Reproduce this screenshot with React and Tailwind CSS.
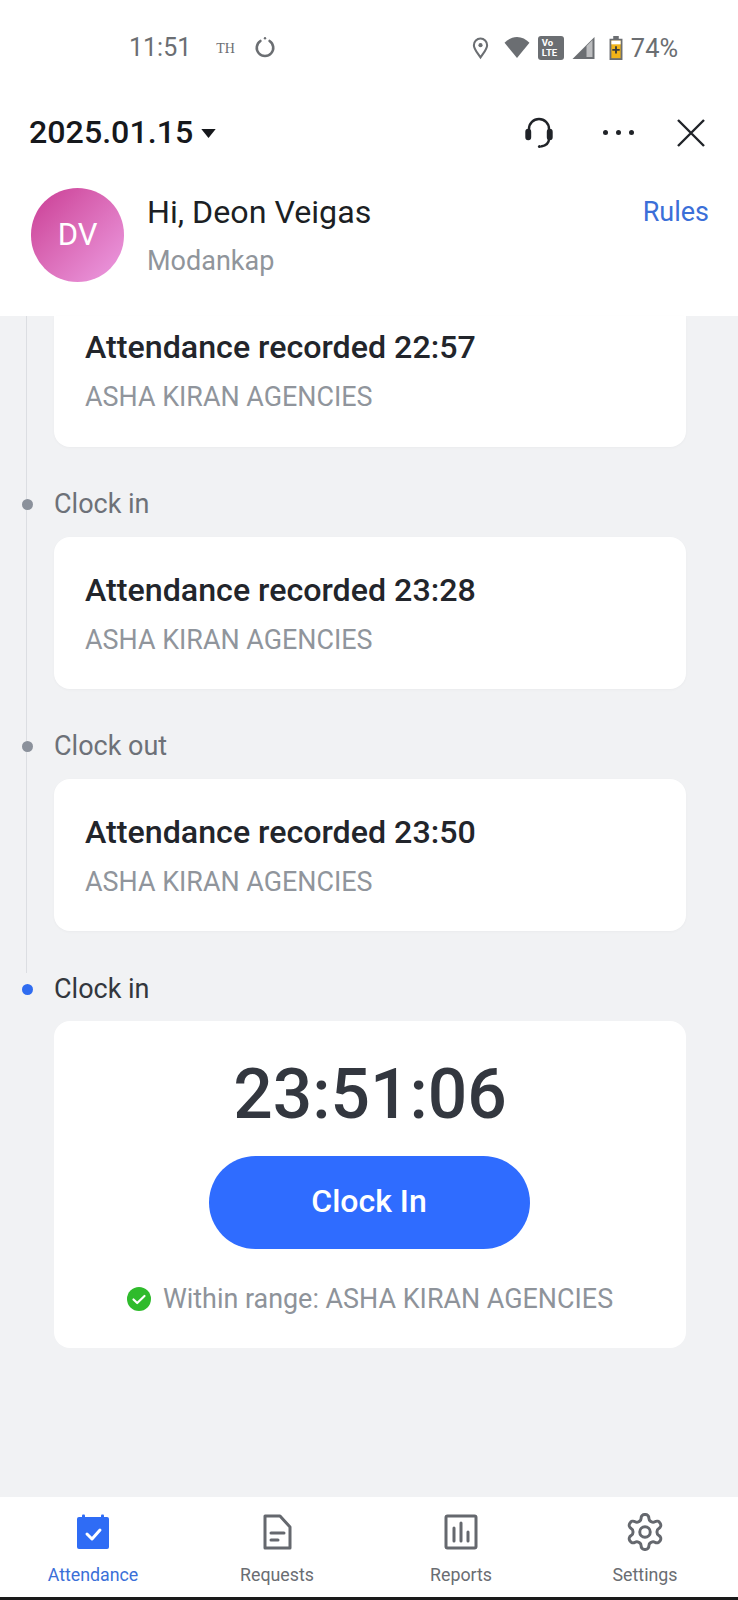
const ROBOTO = { fontFamily: 'Roboto, sans-serif' }

function StatusBar() {
  return (
    <div className="h-[80px] flex items-center justify-between pl-[129px] pr-[60px] pt-[16px] text-[#6b6e72]">
      <div className="flex items-center">
        <span className="text-[25px]">11:51</span>
        <span className="ml-[25px] text-[14px] font-['Liberation_Serif',serif]">TH</span>
        <svg className="ml-[19px] mb-[4px]" width="22" height="24" viewBox="0 0 24 24" fill="none" stroke="#6b6e72" strokeWidth="2.800">
          <path d="M7 6.500a9 9 0 1 0 10 0" strokeLinecap="round" />
          <circle cx="12" cy="3.500" r="1.300" fill="#6b6e72" stroke="none" />
        </svg>
      </div>
      <div className="flex items-center">
        <svg width="17" height="24" viewBox="0 0 18 24" fill="none" stroke="#6b6e72" strokeWidth="2.200">
          <path d="M9 22C5 16 2 13 2 9a7 7 0 0 1 14 0c0 4-3 7-7 13z" />
          <circle cx="9" cy="9" r="2.200" fill="#6b6e72" stroke="none" />
        </svg>
        <svg className="ml-[13px]" width="30" height="23" viewBox="0 0 28 24" fill="#6b6e72">
          <path d="M14 23L1 7c3.500-3.500 8-6 13-6s9.500 2.500 13 6z" />
        </svg>
        <div className="ml-[6px] w-[26px] h-[24px] rounded-[3px] bg-[#6b6e72] text-white text-[9.500px] font-bold leading-[10px] pl-[4px] pt-[2px]">
          <div>Vo</div>
          <div>LTE</div>
        </div>
        <svg className="ml-[7px]" width="25" height="24" viewBox="0 0 24 24">
          <path d="M1 23L23 1v22z" fill="#6b6e72" />
          <path d="M15 10v11h6V4z" fill="#fff" opacity="0.55" />
        </svg>
        <svg className="ml-[13px]" width="14" height="24" viewBox="0 0 14 26">
          <path d="M4 0h6v3h4v23H0V3h4z" fill="#6b6e72" />
          <rect x="2" y="5" width="10" height="19" fill="#f2b418" />
          <rect x="2" y="5" width="10" height="4" fill="#fff" />
          <path d="M6 11h2v3h3v2H8v3H6v-3H3v-2h3z" fill="#3a3a3a" />
        </svg>
        <span className="ml-[8px] text-[25.400px]">74%</span>
      </div>
    </div>
  )
}

function Header() {
  return (
    <div className="bg-white h-[236px] shrink-0">
      <div className="h-[53px] mt-[26px] flex items-center pl-[29px] pr-[32px]">
        <span className="text-[32.200px] font-medium text-[#16181c]">2025.01.15</span>
        <svg className="ml-[8px] mt-[2px]" width="15" height="9" viewBox="0 0 16 10">
          <path d="M0 0h16L8 10z" fill="#16181c" />
        </svg>
        <svg className="ml-auto" width="30" height="32" viewBox="0 0 30 32" fill="none" stroke="#202328" strokeWidth="2.400">
          <path d="M5 14v-2a10 10 0 0 1 20 0v2" />
          <path d="M25 22c0 4-3 6.500-8 7.500" />
          <rect x="2.500" y="13" width="3.500" height="9" rx="1.700" fill="#202328" />
          <rect x="24" y="13" width="3.500" height="9" rx="1.700" fill="#202328" />
          <circle cx="15.500" cy="29.500" r="1.600" fill="#202328" stroke="none" />
        </svg>
        <div className="ml-[49px] flex gap-[8px]">
          <span className="w-[5px] h-[5px] rounded-full bg-[#202328]" />
          <span className="w-[5px] h-[5px] rounded-full bg-[#202328]" />
          <span className="w-[5px] h-[5px] rounded-full bg-[#202328]" />
        </div>
        <svg className="ml-[42px]" width="30" height="30" viewBox="0 0 30 30" fill="none" stroke="#202328" strokeWidth="2.400">
          <path d="M2 2l26 26M28 2L2 28" />
        </svg>
      </div>
      <div className="flex pl-[31px] pr-[29px] mt-[29px]">
        <div className="w-[93px] h-[94px] rounded-full bg-gradient-to-br from-[#c93a94] to-[#ec9ce2] flex items-center justify-center text-white text-[31px]">
          DV
        </div>
        <div className="ml-[23px] pt-[2px]">
          <div className="text-[32.200px] leading-[44px] text-[#1c1f24]">Hi, Deon Veigas</div>
          <div className="text-[27px] leading-[36px] mt-[9px] text-[#90959b]">Modankap</div>
        </div>
        <div className="ml-auto pt-[2px] text-[27px] leading-[44px] text-[#3b6fd8]">Rules</div>
      </div>
    </div>
  )
}

function RecordCard({ time, clipped }) {
  return (
    <div className={`bg-white shadow-[0_1px_3px_rgba(0,0,0,0.03)] ${clipped ? 'rounded-b-[16px] h-[131px] pt-[9px]' : 'rounded-[16px] h-[152px] pt-[31px]'} pl-[31px]`}>
      <div className="text-[32.200px] leading-[44px] font-medium text-[#22252b]">Attendance recorded {time}</div>
      <div className="text-[26.900px] leading-[36px] mt-[10px] text-[#90959c]">ASHA KIRAN AGENCIES</div>
    </div>
  )
}

function StepLabel({ label, active }) {
  return (
    <div className="relative h-[34px] flex items-center">
      <span className={`absolute left-[-32px] w-[11px] h-[11px] rounded-full ${active ? 'bg-[#2f6cf0]' : 'bg-[#8b919b]'}`} />
      <span className={`text-[27px] ${active ? 'text-[#33373d]' : 'text-[#6d7178]'}`}>{label}</span>
    </div>
  )
}

function NavItem({ label, active, children }) {
  return (
    <div className="w-[184px] flex flex-col items-center">
      <div className="h-[40px] flex items-center justify-center">{children}</div>
      <span className={`mt-[10px] text-[17.800px] leading-[26px] ${active ? 'text-[#3b6fd8]' : 'text-[#6a6d72]'}`}>{label}</span>
    </div>
  )
}

export default function App() {
  return (
    <div className="w-[738px] h-[1600px] bg-white flex flex-col overflow-hidden" style={ROBOTO}>
      <StatusBar />
      <Header />

      {/* Timeline */}
      <div className="flex-1 bg-[#f1f2f4] pr-[52px]">
        <div className="ml-[26px] border-l border-[#dcdee2] pl-[27px] h-[657px]">
          <RecordCard time="22:57" clipped />
          <div className="mt-[40px] mb-[16px]"><StepLabel label="Clock in" /></div>
          <RecordCard time="23:28" />
          <div className="mt-[40px] mb-[16px]"><StepLabel label="Clock out" /></div>
          <RecordCard time="23:50" />
        </div>
        <div className="ml-[54px]">
          <div className="mb-[15px] -mt-[1px]"><StepLabel label="Clock in" active /></div>
          <div className="bg-white rounded-[16px] h-[327px] flex flex-col items-center">
            <div className="mt-[30px] text-[69.500px] leading-[88px] font-medium text-[#33373f]">23:51:06</div>
            <button className="mt-[17px] -ml-[2px] w-[321px] h-[93px] pb-[3px] rounded-full bg-[#2f6cff] text-white text-[32px] font-medium">Clock In</button>
            <div className="mt-[32px] flex items-center">
              <svg width="24" height="24" viewBox="0 0 24 24">
                <circle cx="12" cy="12" r="12" fill="#2fbb2c" />
                <path d="M6.500 12.500l3.700 3.500 7.300-7" fill="none" stroke="#fff" strokeWidth="2.200" strokeLinecap="round" strokeLinejoin="round" />
              </svg>
              <span className="ml-[12px] text-[26.900px] leading-[36px] text-[#8e939a]">Within range: ASHA KIRAN AGENCIES</span>
            </div>
          </div>
        </div>
      </div>

      {/* Bottom nav */}
      <div className="h-[100px] bg-white flex pt-[15px] pl-[1px] shrink-0">
        <NavItem label="Attendance" active>
          <svg width="34" height="36" viewBox="0 0 34 36">
            <rect x="1" y="3" width="32" height="32" rx="2" fill="#2f6cf5" />
            <rect x="6" y="0.500" width="3" height="5" rx="1" fill="#2f6cf5" />
            <rect x="25" y="0.500" width="3" height="5" rx="1" fill="#2f6cf5" />
            <path d="M11 20l5 5 8-9" fill="none" stroke="#fff" strokeWidth="3" strokeLinecap="round" strokeLinejoin="round" />
          </svg>
        </NavItem>
        <NavItem label="Requests">
          <svg width="30" height="38" viewBox="0 0 30 38" fill="none" stroke="#65686e" strokeWidth="3" strokeLinejoin="round" strokeLinecap="round">
            <path d="M3 3h15l10 11v21H3z" />
            <path d="M9 20h13M9 27h7" />
          </svg>
        </NavItem>
        <NavItem label="Reports">
          <svg width="34" height="36" viewBox="0 0 34 36" fill="none" stroke="#65686e" strokeWidth="3" strokeLinecap="round">
            <rect x="2" y="2" width="30" height="32" rx="1.500" />
            <path d="M10 14v13M17 9v18M24 18v9" />
          </svg>
        </NavItem>
        <NavItem label="Settings">
          <svg width="42" height="42" viewBox="0 0 24 24" fill="none" stroke="#65686e" strokeWidth="1.700" strokeLinecap="round" strokeLinejoin="round">
            <path d="M12.220 2h-.44a2 2 0 0 0-2 2v.18a2 2 0 0 1-1 1.730l-.43.250a2 2 0 0 1-2 0l-.15-.080a2 2 0 0 0-2.730.730l-.22.380a2 2 0 0 0 .730 2.730l.15.100a2 2 0 0 1 1 1.720v.510a2 2 0 0 1-1 1.740l-.15.090a2 2 0 0 0-.730 2.730l.22.380a2 2 0 0 0 2.730.730l.15-.080a2 2 0 0 1 2 0l.43.250a2 2 0 0 1 1 1.730V20a2 2 0 0 0 2 2h.44a2 2 0 0 0 2-2v-.18a2 2 0 0 1 1-1.730l.43-.250a2 2 0 0 1 2 0l.15.080a2 2 0 0 0 2.730-.730l.22-.390a2 2 0 0 0-.730-2.730l-.15-.080a2 2 0 0 1-1-1.740v-.5a2 2 0 0 1 1-1.740l.15-.090a2 2 0 0 0 .730-2.730l-.22-.380a2 2 0 0 0-2.730-.730l-.15.080a2 2 0 0 1-2 0l-.43-.250a2 2 0 0 1-1-1.730V4a2 2 0 0 0-2-2z" />
            <circle cx="12" cy="12" r="3" />
          </svg>
        </NavItem>
      </div>
      <div className="h-[3px] bg-[#1a1a1a] shrink-0" />
    </div>
  )
}
